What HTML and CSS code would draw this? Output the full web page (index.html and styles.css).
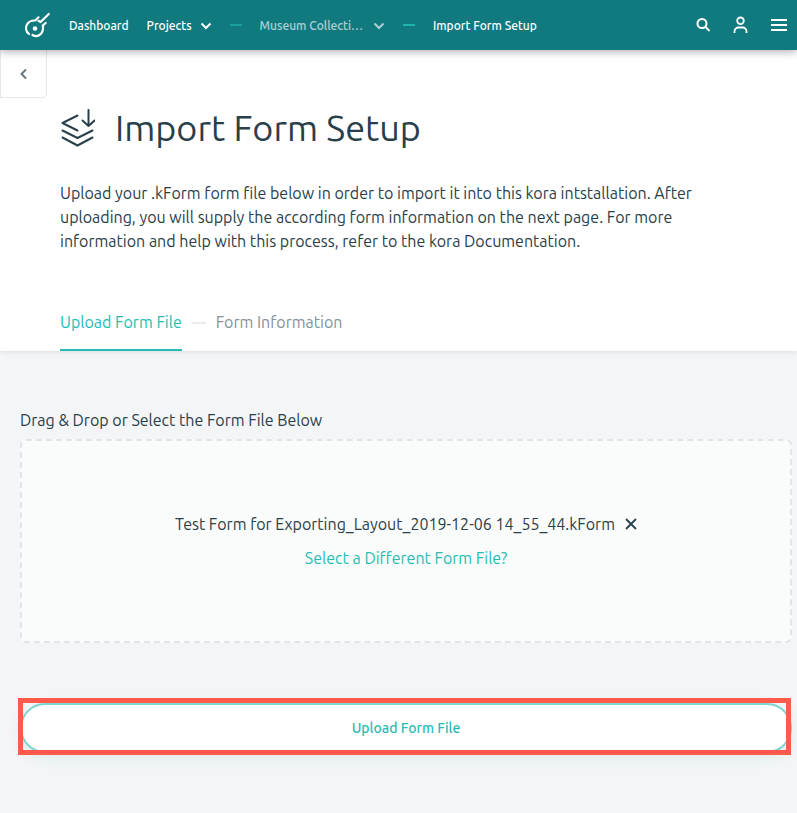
FILE: index.html
```html
<!DOCTYPE html>
<html lang="en">
<head>
<meta charset="utf-8">
<meta name="viewport" content="width=device-width, initial-scale=1">
<title>Import Form Setup</title>
<link rel="stylesheet" href="styles.css">
</head>
<body>
<header class="topbar">
  <a class="logo" href="#" aria-label="Kora home">
    <svg width="26" height="26" viewBox="0 0 26 26" fill="none" stroke="currentColor" stroke-width="2.200" stroke-linecap="round" stroke-linejoin="round">
      <path d="M5 22C1.800 19.500 1.300 15.500 3 12.500C4.800 9.300 7.500 8.300 11.200 8.500L14.500 5.300"/>
      <path d="M14.500 8.800L16.500 10L24.800 2"/>
      <path d="M21.600 11L18.800 13.500C19.500 17.500 18.500 21 15.500 23C13.300 24.300 10.500 24.300 8.500 23"/>
      <circle cx="11" cy="16.500" r="2.300" fill="currentColor" stroke="none"/>
    </svg>
  </a>
  <nav class="crumbs" aria-label="Breadcrumb">
    <a class="crumb" href="#">Dashboard</a>
    <a class="crumb" href="#">Projects
      <svg class="chevron" width="12" height="8" viewBox="0 0 12 8"><path d="M1.500 1.500L6 6l4.500-4.500"/></svg>
    </a>
    <span class="dash dash-dim"></span>
    <a class="crumb crumb-dim" href="#"><span>Museum Collecti…</span>
      <svg class="chevron" width="12" height="8" viewBox="0 0 12 8"><path d="M1.500 1.500L6 6l4.500-4.500"/></svg>
    </a>
    <span class="dash"></span>
    <a class="crumb" href="#">Import Form Setup</a>
  </nav>
  <div class="tools">
    <button class="tool" type="button" aria-label="Search">
      <svg width="16" height="16" viewBox="0 0 16 16" fill="none" stroke="currentColor" stroke-width="2"><circle cx="7" cy="6.500" r="4.500"/><path d="M10.500 10l4 4"/></svg>
    </button>
    <button class="tool" type="button" aria-label="Account">
      <svg width="16" height="18" viewBox="0 0 16 18" fill="none" stroke="currentColor" stroke-width="1.800"><circle cx="7.500" cy="4.800" r="3.300"/><path d="M1.500 17v-1.500a4 4 0 0 1 4-4h4a4 4 0 0 1 4 4V17"/></svg>
    </button>
    <button class="tool" type="button" aria-label="Menu">
      <svg width="16" height="16" viewBox="0 0 16 16" fill="none" stroke="currentColor" stroke-width="1.800"><path d="M0 3h16M0 8h16M0 13h16"/></svg>
    </button>
  </div>
</header>

<section class="intro">
  <button class="back" type="button" aria-label="Back">
    <svg width="8" height="12" viewBox="0 0 8 12" fill="none" stroke="currentColor" stroke-width="2"><path d="M6 1.500L1.500 6L6 10.500"/></svg>
  </button>
  <div class="intro-body">
    <h1 class="title">
      <svg width="35" height="38" viewBox="0 0 35 38" fill="none" stroke="currentColor" stroke-width="2" stroke-linecap="round" stroke-linejoin="round">
        <path d="M17.500 6.500L2.500 14L17.500 21.500M2.500 21.500l15 7.500L32.500 21.500M2.500 28.500l15 8L32.500 28.500"/>
        <path d="M28.500 1v16M22.500 11.500l6 5.500 6-5.500"/>
      </svg>
      Import Form Setup
    </h1>
    <p class="lead">Upload your .kForm form file below in order to import it into this kora intstallation. After uploading, you will supply the according form information on the next page. For more information and help with this process, refer to the kora Documentation.</p>
    <nav class="steps" aria-label="Steps">
      <a class="step step-active" href="#">Upload Form File</a>
      <span class="step-dash"></span>
      <a class="step" href="#">Form Information</a>
    </nav>
  </div>
</section>

<main class="upload">
  <h2 class="label">Drag &amp; Drop or Select the Form File Below</h2>
  <div class="dropzone">
    <div class="file">
      <span>Test Form for Exporting_Layout_2019-12-06 14_55_44.kForm</span>
      <button class="remove" type="button" aria-label="Remove file">
        <svg width="12" height="12" viewBox="0 0 12 12" fill="none" stroke="currentColor" stroke-width="1.800"><path d="M1 1l10 10M11 1L1 11"/></svg>
      </button>
    </div>
    <a class="choose" href="#">Select a Different Form File?</a>
  </div>
  <div class="submit-row">
    <button class="submit" type="submit">Upload Form File</button>
    <span class="highlight"></span>
  </div>
</main>
</body>
</html>
```
FILE: styles.css
```css
* { box-sizing: border-box; }

body {
  margin: 0;
  background: #f4f5f7;
  color: #29404a;
  font: 16px/24px Ubuntu, "Noto Sans", sans-serif;
}

a { color: inherit; text-decoration: none; }

button {
  padding: 0;
  border: 0;
  background: none;
  color: inherit;
  font: inherit;
  cursor: pointer;
}

svg { display: block; flex: none; }

.topbar {
  position: relative;
  z-index: 1;
  display: flex;
  align-items: center;
  height: 50px;
  padding: 0 10px 0 24px;
  background: #117a7f;
  color: #fff;
  box-shadow: 0 2px 8px rgba(0, 0, 0, 0.3);
}

.logo { margin-right: 19px; }

.crumbs {
  display: flex;
  align-items: center;
  gap: 18px;
  font-size: 12px;
  font-weight: 500;
  line-height: 26px;
  white-space: nowrap;
}

.crumb { display: flex; align-items: center; gap: 8px; padding-top: 2px; }
.crumb-dim { gap: 10px; opacity: 0.65; }
.chevron { fill: none; stroke: currentColor; stroke-width: 2; }
.dash { width: 12px; height: 2px; background: #1fb5ac; }
.dash-dim { opacity: 0.65; }

.tools { display: flex; align-items: center; gap: 22px; margin-left: auto; }

.intro {
  background: #fff;
  box-shadow: 0 1px 5px rgba(0, 0, 0, 0.1);
}

.back {
  display: flex;
  align-items: center;
  justify-content: center;
  width: 47px;
  height: 48px;
  border: 1px solid #e5e7e8;
  border-top: 0;
  border-radius: 0 0 5px 0;
  color: #68777d;
}

.intro-body { padding: 8px 60px 0; }

.title {
  display: flex;
  align-items: center;
  gap: 20px;
  margin: 0;
  font-size: 36px;
  font-weight: 400;
  line-height: 44px;
}

.lead { max-width: 650px; margin: 31px 0 57px; }

.steps { display: flex; align-items: flex-start; gap: 10px; }
.step { padding-bottom: 15px; color: #84929a; }
.step-active { border-bottom: 2px solid #27bcb3; color: #27bcb3; }
.step-dash { width: 14px; height: 2px; margin-top: 12px; background: #e9ebec; }

.upload { padding: 57px 5px 58px 20px; }
.label { margin: 0 0 7px; font-size: 16px; font-weight: 400; }

.dropzone {
  display: flex;
  flex-direction: column;
  align-items: center;
  gap: 10px;
  padding: 71px 20px;
  border: 2px dashed #e2e5e7;
  border-radius: 6px;
  background: #fafcfb;
}

.file { display: flex; align-items: center; gap: 10px; }
.choose { color: #27bcb3; }

.submit-row { position: relative; margin-top: 60px; }

.submit {
  display: block;
  width: 100%;
  height: 50px;
  border: 2px solid #80d4cf;
  border-radius: 25px;
  background: #fff;
  color: #27bcb3;
  font-size: 14px;
  font-weight: 500;
  box-shadow: 0 4px 16px rgba(39, 188, 179, 0.12);
}

.highlight {
  position: absolute;
  inset: -5px 1px -2px -2px;
  border: 5px solid #ff5a4c;
  pointer-events: none;
}
```
